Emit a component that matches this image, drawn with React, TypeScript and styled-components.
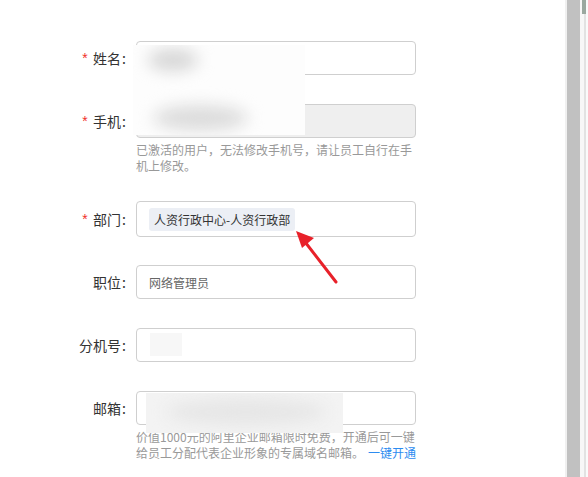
import React, { FC } from 'react';
import styled, { createGlobalStyle } from 'styled-components';

const GlobalStyle = createGlobalStyle`
  html, body {
    margin: 0;
    padding: 0;
    background: #fff;
    overflow: hidden;
  }
  body {
    font-family: "Noto Sans CJK SC", "Noto Sans", "Liberation Sans", sans-serif;
  }
`;

const Page = styled.div`
  display: flex;
  width: 588px;
  height: 477px;
  overflow: hidden;
  position: relative;
`;

const Content = styled.div`
  flex: 1;
  position: relative;
  padding-top: 41px;
`;

const FormItem = styled.div<{ $gap?: number }>`
  display: flex;
  align-items: flex-start;
  margin-bottom: ${(p) => (p.$gap ?? 29)}px;
`;

const Label = styled.label<{ $h?: number }>`
  width: 126px;
  height: ${(p) => p.$h ?? 34}px;
  display: flex;
  align-items: center;
  justify-content: flex-end;
  font-size: 14px;
  color: #333;
  margin-right: 10px;
  flex-shrink: 0;
`;

const Colon = styled.span`
  margin-left: 1px;
`;

const Required = styled.span`
  color: #f0302a;
  font-size: 14px;
  font-family: "Liberation Mono", monospace;
  margin-right: 4px;
  position: relative;
  top: 2px;
`;

const Control = styled.div`
  width: 280px;
  display: flex;
  flex-direction: column;
`;

const Input = styled.div<{ $disabled?: boolean; $h?: number }>`
  box-sizing: border-box;
  height: ${(p) => p.$h ?? 34}px;
  border: 1px solid #cfcfcf;
  border-radius: 4px;
  background: ${(p) => (p.$disabled ? '#efefef' : '#fff')};
  display: flex;
  align-items: center;
  padding: 0 12px;
  font-size: 12px;
  color: #666;
`;

const Tag = styled.span`
  display: inline-flex;
  align-items: center;
  height: 23px;
  padding: 0 5px;
  border-radius: 3px;
  background: #eceff5;
  color: #333;
  font-size: 12px;
`;

const Hint = styled.div`
  margin-top: 4px;
  font-size: 12px;
  line-height: 16px;
  color: #999;
  white-space: nowrap;
`;

const Link = styled.a`
  color: #2d8cf0;
  text-decoration: none;
  margin-left: 4px;
`;

const Smudge = styled.div`
  position: absolute;
  background: #fdfdfd;
  overflow: hidden;
`;

const Blob = styled.div`
  position: absolute;
  border-radius: 50%;
  filter: blur(8px);
`;

const Arrow = styled.svg`
  position: absolute;
  left: 290px;
  top: 226px;
  overflow: visible;
`;

const Scrollbar = styled.div`
  width: 23px;
  height: 477px;
  display: flex;
  background: #fafafa;
`;

const TrackEdge = styled.div`
  width: 2px;
  background: #f0f0f0;
`;

const Thumb = styled.div`
  width: 13px;
  background: #c1c1c1;
`;

const TrackRight = styled.div`
  width: 4px;
  background: #f7f7f7;
`;

const Divider = styled.div`
  width: 2px;
  background: #e2e2e2;
  position: relative;
`;

const Corner = styled.div`
  position: absolute;
  right: 0;
  top: 0;
  width: 4px;
  height: 14px;
  background: #9aa89f;
`;

const Item: FC<{
  label: string;
  required?: boolean;
  gap?: number;
  h?: number;
  children: React.ReactNode;
}> = ({ label, required, gap, h, children }) => (
  <FormItem $gap={gap}>
    <Label $h={h}>
      {required && <Required>*</Required>}
      {label}
      <Colon>:</Colon>
    </Label>
    <Control>{children}</Control>
  </FormItem>
);

export default function App() {
  return (
    <Page>
      <GlobalStyle />
      <Content>
        <Item label="姓名" required>
          <Input />
        </Item>
        <Item label="手机" required gap={27}>
          <Input $disabled />
          <Hint>
            已激活的用户，无法修改手机号，请让员工自行在手
            <br />
            机上修改。
          </Hint>
        </Item>
        <Item label="部门" required h={36} gap={28}>
          <Input $h={36}>
            <Tag>人资行政中心-人资行政部</Tag>
          </Input>
        </Item>
        <Item label="职位">
          <Input>网络管理员</Input>
        </Item>
        <Item label="分机号">
          <Input />
        </Item>
        <Item label="邮箱">
          <Input />
          <Hint>
            价值1000元的阿里企业邮箱限时免费，开通后可一键
            <br />
            给员工分配代表企业形象的专属域名邮箱。
            <Link>一键开通</Link>
          </Hint>
        </Item>

        <Smudge style={{ left: 133, top: 45, width: 172, height: 90 }}>
          <Blob style={{ left: 15, top: 4, width: 50, height: 22, background: '#d6d6d6' }} />
          <Blob style={{ left: 20, top: 60, width: 95, height: 26, background: '#dcdcdc' }} />
        </Smudge>
        <Smudge style={{ left: 150, top: 333, width: 32, height: 23, background: '#f7f7f7' }} />
        <Smudge style={{ left: 146, top: 393, width: 197, height: 40, background: '#f3f3f3' }}>
          <Blob style={{ left: 20, top: 6, width: 160, height: 26, background: '#e6e6e6' }} />
        </Smudge>

        <Arrow width="60" height="60" viewBox="0 0 60 60">
          <line x1="46" y1="56" x2="12" y2="12" stroke="#e8212a" strokeWidth="3" strokeLinecap="round" />
          <polygon points="6,5 24,12 12,22" fill="#e8212a" />
        </Arrow>
      </Content>
      <Scrollbar>
        <TrackEdge />
        <Thumb />
        <TrackRight />
        <Divider>
          <Corner />
        </Divider>
      </Scrollbar>
    </Page>
  );
}
